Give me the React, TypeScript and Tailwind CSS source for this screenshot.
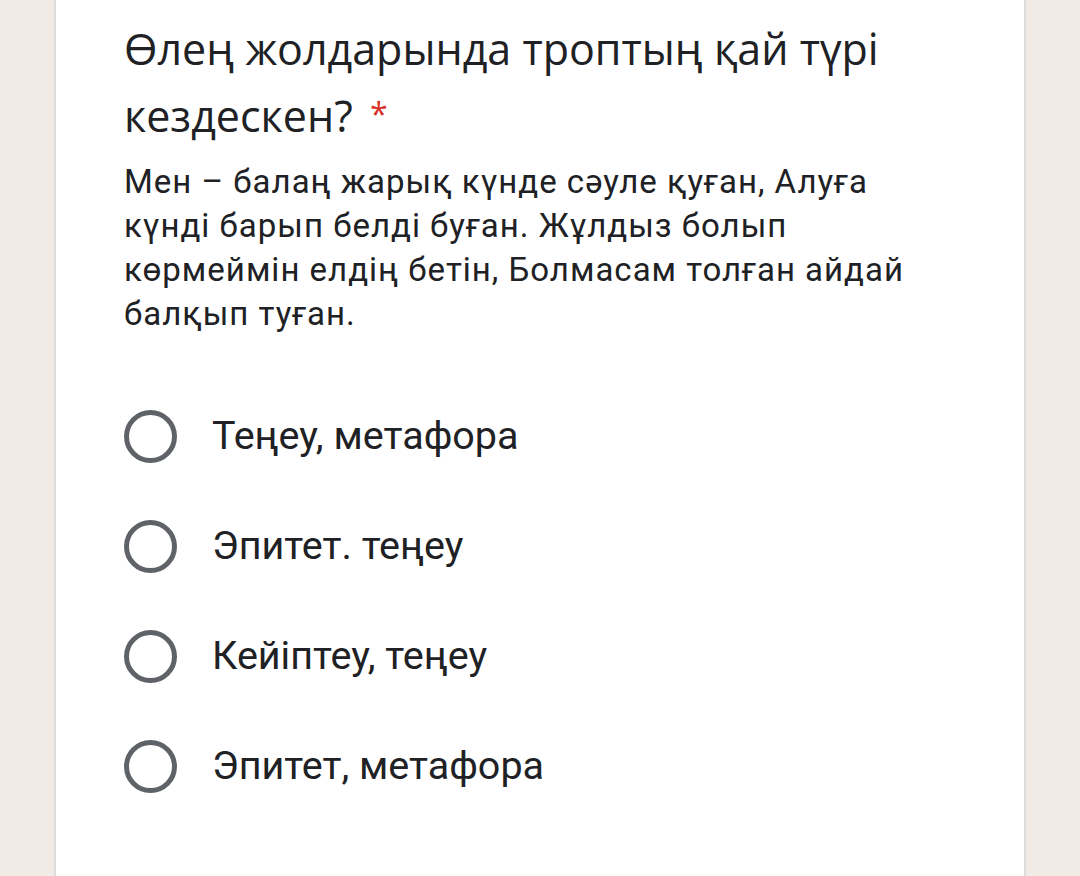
const options = [
  "Теңеу, метафора",
  "Эпитет. теңеу",
  "Кейіптеу, теңеу",
  "Эпитет, метафора",
];

const Radio = ({ label }: { label: string }) => {
  return (
    <label className="flex items-center h-[110px] cursor-pointer">
      <span className="w-[53px] h-[53px] rounded-full border-[5px] border-[#5f6368] shrink-0" />
      <span className="ml-[35px] text-[39.5px] leading-none text-[#202124]">
        {label}
      </span>
    </label>
  );
};

export default function App() {
  return (
    <div
      className="w-[1080px] h-[876px] overflow-hidden bg-[#f2eae5]"
      style={{ fontFamily: "Roboto, 'Noto Sans', sans-serif" }}
    >
      <div className="ml-[54px] w-[972px] h-[896px] bg-white border-x-2 border-[#dcdcdc] rounded-b-[16px] pl-[68px] pr-[40px] pt-[16px]">
        <h1
          className="text-[43px] leading-[65px] text-[#202124] font-normal"
          style={{ fontFamily: "'Open Sans', Roboto, sans-serif" }}
        >
          Өлең жолдарында троптың қай түрі кездескен?{" "}
          <span className="ml-[6px] text-[#d93025] text-[32px] align-[6px]">*</span>
        </h1>
        <p className="mt-[12px] w-[820px] text-[33px] tracking-[1px] leading-[44px] text-[#202124]">
          Мен – балаң жарық күнде сәуле қуған, Алуға күнді барып белді буған.
          Жұлдыз болып көрмеймін елдің бетін, Болмасам толған айдай балқып
          туған.
        </p>
        <div className="mt-[45px] flex flex-col">
          {options.map((o) => (
            <Radio key={o} label={o} />
          ))}
        </div>
      </div>
    </div>
  );
}
